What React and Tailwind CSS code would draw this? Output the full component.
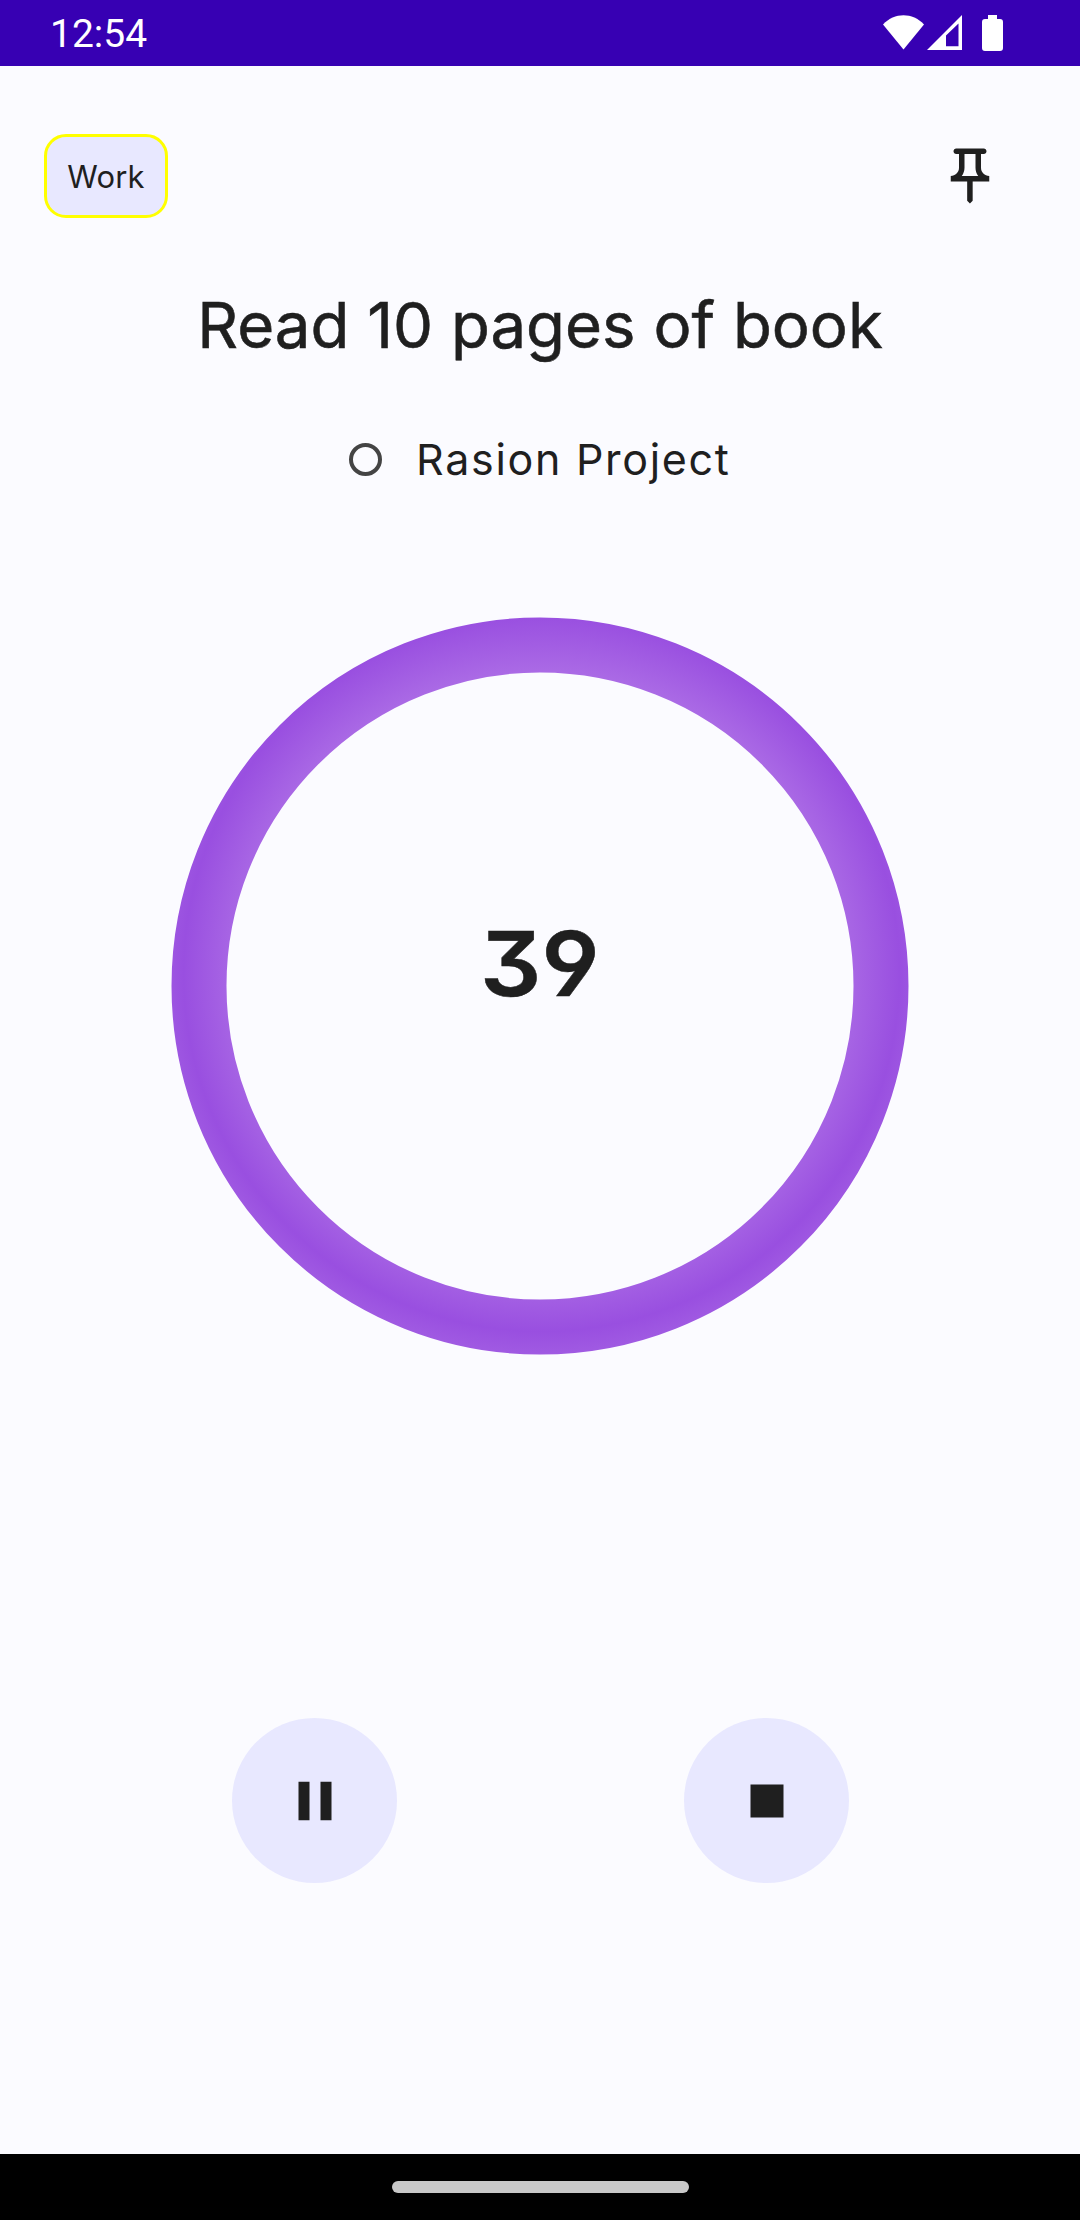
const rubik = "font-['Inter',sans-serif] text-[#1f1f1f] whitespace-nowrap";

function StatusBar() {
  return (
    <div className="flex h-[66px] items-center justify-between bg-[#3700b3] pl-[50px] pr-[76px]">
      <span className="pt-[3px] font-['Roboto',sans-serif] text-[39px] leading-none text-white">12:54</span>
      <svg className="h-[66px] w-[124px]" viewBox="880 0 124 66" fill="#fff">
        <path d="M883 24.500C894.500 12.200 912.500 12.200 924 24.500L903.500 49.500Z" />
        <path fillRule="evenodd" d="M927 50L962 15V50ZM946 35.500V46.200H958.500V23.500Z" />
        <path d="M988 15h9v4h3q3 0 3 3v26q0 3-3 3h-15q-3 0-3-3V22q0-3 3-3h3Z" />
      </svg>
    </div>
  );
}

function ProgressRing({ value }) {
  return (
    <div className="mx-auto grid h-[738px] w-[738px] place-items-center">
      <svg className="col-start-1 row-start-1" width="738" height="738" viewBox="171.500 617.500 738 738" fill="none">
        <defs>
          <radialGradient id="ring" gradientUnits="userSpaceOnUse" cx="542" cy="974" r="358" spreadMethod="reflect">
            <stop offset="0.82" stopColor="#ad6ee6" />
            <stop offset="1" stopColor="#994fe0" />
          </radialGradient>
        </defs>
        <circle cx="540.500" cy="986.500" r="341" stroke="url(#ring)" strokeWidth="55" />
      </svg>
      <span className={`${rubik} col-start-1 row-start-1 mb-[45px] inline-block scale-x-[1.07] text-[90px] font-semibold leading-none [font-feature-settings:'cv09','ss01'] [-webkit-text-stroke:0.5px_#1f1f1f]`}>
        {value}
      </span>
    </div>
  );
}

function RoundButton({ label, path }) {
  return (
    <button aria-label={label} className="flex h-[165px] w-[165px] items-center justify-center rounded-full bg-[#e8e8ff]">
      <svg width="66" height="66" viewBox="0 0 24 24" fill="#1f1f1f">
        <path d={path} />
      </svg>
    </button>
  );
}

export default function App() {
  return (
    <div className="flex h-[2220px] w-[1080px] flex-col overflow-hidden bg-[#fbfbff]">
      <StatusBar />
      <main className="flex flex-1 flex-col">
        <div className="flex items-center justify-between pl-[44px] pr-[77px] pt-[68px]">
          <div className="flex h-[84px] w-[124px] items-center justify-center rounded-[22px] border-[3px] border-[#ffff00] bg-[#e8e8ff]">
            <span className={`${rubik} text-[31px] leading-none tracking-[0.2px]`}>Work</span>
          </div>
          <svg width="66" height="66" viewBox="0 0 24 24" fill="#1f1f1f">
            <path d="M14 4v5c0 1.12.37 2.16 1 3H9c.65-.86 1-1.9 1-3V4h4m3-2H7c-.55 0-1 .45-1 1s.45 1 1 1h1v5c0 1.66-1.34 3-3 3v2h5.970v7l1 1 1-1v-7H19v-2c-1.660 0-3-1.340-3-3V4h1c.55 0 1-.45 1-1s-.45-1-1-1z" />
          </svg>
        </div>
        <h1 className={`${rubik} mt-[68px] h-[78px] text-center text-[63.500px] leading-[78px] [-webkit-text-stroke:0.6px_#1f1f1f]`}>Read 10 pages of book</h1>
        <div className="mt-[65px] flex h-[60px] items-center pl-[349px]">
          <span className="h-[33px] w-[33px] rounded-full border-4 border-[#444444]" />
          <span className={`${rubik} ml-[34px] text-[43px] leading-[60px] tracking-[1.700px]`}>Rasion Project</span>
        </div>
        <div className="pt-[128px]">
          <ProgressRing value="39" />
        </div>
        <div className="mt-[363px] flex gap-[287px] pl-[232px]">
          <RoundButton label="Pause" path="M6 19h4V5H6v14zm8-14v14h4V5h-4z" />
          <RoundButton label="Stop" path="M6 6h12v12H6z" />
        </div>
      </main>
      <div className="flex h-[66px] items-center justify-center bg-black">
        <div className="h-[12px] w-[297px] rounded-full bg-[#c8c8c8]" />
      </div>
    </div>
  );
}
